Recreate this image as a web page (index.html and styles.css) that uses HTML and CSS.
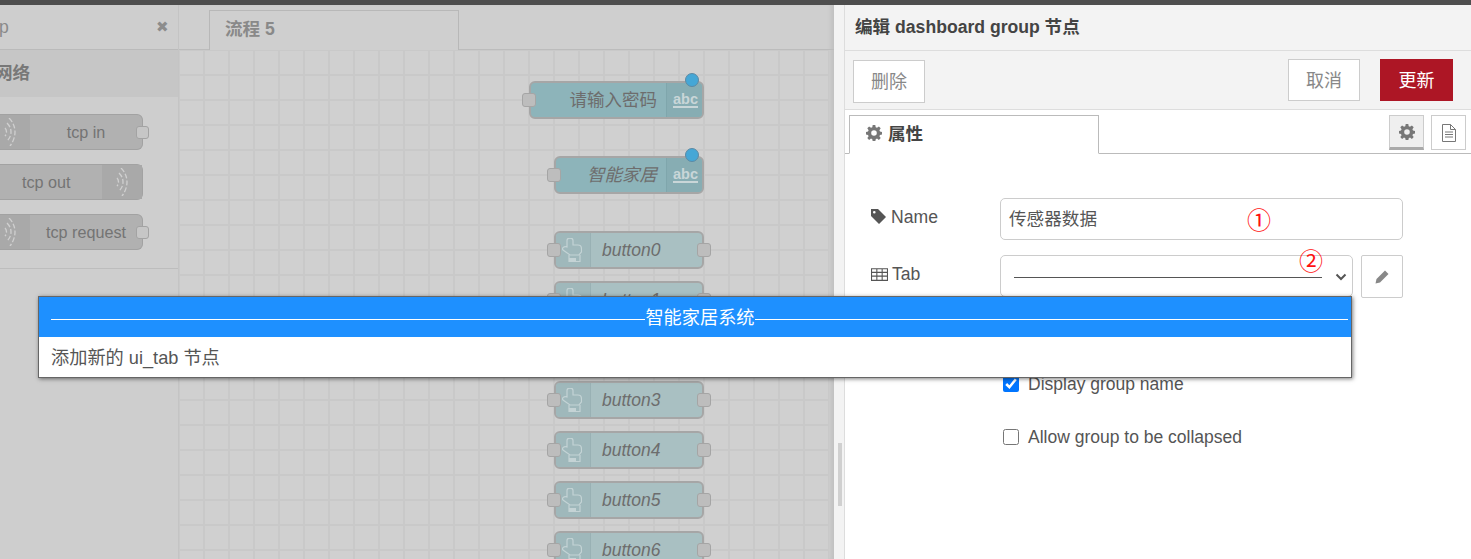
FILE: index.html
```html
<!DOCTYPE html>
<html lang="zh">
<head>
<meta charset="utf-8">
<title>Node-RED</title>
<link rel="stylesheet" href="styles.css">
</head>
<body>
<div class="topbar"></div>
<div class="main">
  <aside class="palette">
    <div class="palette-head"><span class="palette-title">p</span><span class="palette-close">✖</span></div>
    <div class="category-head">网络</div>
    <div class="category-body">
      <div class="pnode pnode-in"><span class="picon"><svg width="12" height="28" viewBox="0 0 12 28"><path class="wave" d="M5 0c4 4 6 9 6 14s-2 10-5 14M3 5c3 3 4 6 4 9s-1 6-4 9M1 10c1 1 1.500 3 1.500 4s-.5 3-1.500 4"/></svg></span><span class="plabel">tcp in</span><i class="pport"></i></div>
      <div class="pnode pnode-out"><span class="plabel">tcp out</span><span class="picon"><svg width="12" height="28" viewBox="0 0 12 28"><path class="wave" d="M5 0c4 4 6 9 6 14s-2 10-5 14M3 5c3 3 4 6 4 9s-1 6-4 9M1 10c1 1 1.500 3 1.500 4s-.5 3-1.500 4"/></svg></span></div>
      <div class="pnode pnode-in"><span class="picon"><svg width="12" height="28" viewBox="0 0 12 28"><path class="wave" d="M5 0c4 4 6 9 6 14s-2 10-5 14M3 5c3 3 4 6 4 9s-1 6-4 9M1 10c1 1 1.500 3 1.500 4s-.5 3-1.500 4"/></svg></span><span class="plabel plabel-req">tcp request</span><i class="pport"></i></div>
    </div>
  </aside>
  <section class="workspace">
    <div class="tabs"><div class="tab">流程 5</div></div>
    <div class="canvas">
      <div class="node node-text n-pass"><i class="port port-l"></i><span class="nlabel nlabel-r">请输入密码</span><span class="abc">abc</span><i class="dot"></i></div>
      <div class="node node-text n-home"><i class="port port-l"></i><span class="nlabel nlabel-r nlabel-i">智能家居</span><span class="abc">abc</span><i class="dot"></i></div>
      <div class="node node-btn n-b0"><i class="port port-l"></i><span class="hand"><svg width="20" height="24" viewBox="0 0 20 24"><path class="handp" d="M5 9V2.500c0-3.300 6-3.300 6 0V7h5c2.500 0 3.500 1.500 3.500 4v3L17 17H8L1 12c-1.500-2 1-4 4-3z"/><path class="handp" d="M7 17v6.500h11V17"/><path class="handf" d="M7 20h7v4H7z"/></svg></span><span class="nlabel nlabel-i">button0</span><i class="port port-r"></i></div>
      <div class="node node-btn n-b1"><i class="port port-l"></i><span class="hand"><svg width="20" height="24" viewBox="0 0 20 24"><path class="handp" d="M5 9V2.500c0-3.300 6-3.300 6 0V7h5c2.500 0 3.500 1.500 3.500 4v3L17 17H8L1 12c-1.500-2 1-4 4-3z"/><path class="handp" d="M7 17v6.500h11V17"/><path class="handf" d="M7 20h7v4H7z"/></svg></span><span class="nlabel nlabel-i">button1</span><i class="port port-r"></i></div>
      <div class="node node-btn n-b3"><i class="port port-l"></i><span class="hand"><svg width="20" height="24" viewBox="0 0 20 24"><path class="handp" d="M5 9V2.500c0-3.300 6-3.300 6 0V7h5c2.500 0 3.500 1.500 3.500 4v3L17 17H8L1 12c-1.500-2 1-4 4-3z"/><path class="handp" d="M7 17v6.500h11V17"/><path class="handf" d="M7 20h7v4H7z"/></svg></span><span class="nlabel nlabel-i">button3</span><i class="port port-r"></i></div>
      <div class="node node-btn n-b4"><i class="port port-l"></i><span class="hand"><svg width="20" height="24" viewBox="0 0 20 24"><path class="handp" d="M5 9V2.500c0-3.300 6-3.300 6 0V7h5c2.500 0 3.500 1.500 3.500 4v3L17 17H8L1 12c-1.500-2 1-4 4-3z"/><path class="handp" d="M7 17v6.500h11V17"/><path class="handf" d="M7 20h7v4H7z"/></svg></span><span class="nlabel nlabel-i">button4</span><i class="port port-r"></i></div>
      <div class="node node-btn n-b5"><i class="port port-l"></i><span class="hand"><svg width="20" height="24" viewBox="0 0 20 24"><path class="handp" d="M5 9V2.500c0-3.300 6-3.300 6 0V7h5c2.500 0 3.500 1.500 3.500 4v3L17 17H8L1 12c-1.500-2 1-4 4-3z"/><path class="handp" d="M7 17v6.500h11V17"/><path class="handf" d="M7 20h7v4H7z"/></svg></span><span class="nlabel nlabel-i">button5</span><i class="port port-r"></i></div>
      <div class="node node-btn n-b6"><i class="port port-l"></i><span class="hand"><svg width="20" height="24" viewBox="0 0 20 24"><path class="handp" d="M5 9V2.500c0-3.300 6-3.300 6 0V7h5c2.500 0 3.500 1.500 3.500 4v3L17 17H8L1 12c-1.500-2 1-4 4-3z"/><path class="handp" d="M7 17v6.500h11V17"/><path class="handf" d="M7 20h7v4H7z"/></svg></span><span class="nlabel nlabel-i">button6</span><i class="port port-r"></i></div>
    </div>
  </section>
  <div class="separator"><i class="grip"></i></div>
  <section class="tray">
    <header class="tray-title">编辑 dashboard group 节点</header>
    <div class="tray-actions">
      <button class="btn btn-delete">删除</button>
      <div class="spacer"></div>
      <button class="btn">取消</button>
      <button class="btn btn-primary">更新</button>
    </div>
    <div class="tray-tabs">
      <div class="ttab"><svg class="ic-gear" width="16" height="16" viewBox="0 0 16 16"><path fill-rule="evenodd" d="M6.700 0h2.600l.4 2.200 1.300.6L12.900 1.500l1.800 1.800-1.300 1.900.6 1.300 2 .4v2.600l-2 .4-.6 1.300 1.300 1.900-1.800 1.800-1.900-1.300-1.300.6-.4 2.200H6.700l-.4-2.200-1.300-.6-1.900 1.300-1.800-1.800 1.300-1.900-.6-1.300-2-.4V6.900l2-.4.6-1.300L1.300 3.300l1.800-1.800L5 2.800l1.300-.6zM8 5.200a2.800 2.800 0 1 0 0 5.600 2.800 2.800 0 0 0 0-5.600z"/></svg> 属性</div>
      <div class="spacer"></div>
      <button class="tbtn tbtn-on"><svg class="ic-gear" width="16" height="16" viewBox="0 0 16 16"><path fill-rule="evenodd" d="M6.700 0h2.600l.4 2.200 1.300.6L12.900 1.500l1.800 1.800-1.300 1.900.6 1.300 2 .4v2.600l-2 .4-.6 1.300 1.300 1.900-1.800 1.800-1.900-1.300-1.300.6-.4 2.200H6.700l-.4-2.200-1.300-.6-1.900 1.300-1.800-1.800 1.300-1.900-.6-1.300-2-.4V6.900l2-.4.6-1.300L1.300 3.300l1.800-1.800L5 2.800l1.300-.6zM8 5.200a2.800 2.800 0 1 0 0 5.600 2.800 2.800 0 0 0 0-5.600z"/></svg></button>
      <button class="tbtn"><svg width="14" height="18" viewBox="0 0 14 18"><path class="doc" d="M.5.500h8l5 5v12H.5zM8.500.500v5h5M3 8h8M3 10.500h8M3 13h8"/></svg></button>
    </div>
    <div class="form">
      <div class="row row-name">
        <label class="flabel"><svg width="16" height="16" viewBox="0 0 16 16"><path class="ic-fill" fill-rule="evenodd" d="M0 0h7l8 8-7 7-8-8zM3.300 2a1.300 1.300 0 1 0 0 2.600 1.300 1.300 0 0 0 0-2.600z"/></svg> Name</label>
        <div class="input">传感器数据</div>
      </div>
      <div class="row row-tab">
        <label class="flabel"><svg width="17" height="15" viewBox="0 0 16 14"><path class="ic-line" d="M.5 1.500h15v11H.5zM.5 5h15M.5 8.500h15M5.500 1.500v11M10.500 1.500v11"/></svg> Tab</label>
        <div class="select"><i class="select-line"></i><svg class="chev" width="12" height="8" viewBox="0 0 12 8"><path d="M1.500 1.500 6 6l4.500-4.500" /></svg></div>
        <button class="edit"><svg width="16" height="16" viewBox="0 0 16 16"><path class="ic-pencil" d="M11 1.500l3.500 3.500-8.500 8.500-4.500 1 1-4.500z"/></svg></button>
      </div>
      <label class="check check-1"><input type="checkbox" checked> Display group name</label>
      <label class="check check-2"><input type="checkbox"> Allow group to be collapsed</label>
    </div>
  </section>
</div>
<span class="mark mark-1">①</span>
<span class="mark mark-2">②</span>
<div class="menu">
  <div class="menu-item menu-sel"><i class="menu-rule"></i><span class="menu-text">智能家居系统</span></div>
  <div class="menu-item">添加新的 ui_tab 节点</div>
</div>
</body>
</html>
```
FILE: styles.css
```css
* { box-sizing: border-box; }
html, body { margin: 0; height: 100%; overflow: hidden; }
body { font-family: "Liberation Sans", "Noto Sans CJK SC", sans-serif; font-size: 17.6px; color: #555; background: #fff; position: relative; }
svg { display: block; }
.topbar { height: 5px; background: #4e4e4e; }
.main { display: flex; height: 554px; }
.spacer { flex: 1; }

/* palette */
.palette { width: 179px; flex: none; background: #cecece; border-right: 1px solid #c4c4c4; overflow: hidden; }
.palette-head { height: 45px; border-bottom: 1px solid #bababa; display: flex; justify-content: space-between; align-items: center; padding-right: 9px; font-size: 17.6px; color: #8a8a8a; }
.palette-title { margin-left: -1px; }
.palette-close { font-size: 15px; color: #8c8c8c; }
.category-head { height: 47px; background: #c6c6c6; font-weight: bold; color: #787878; font-size: 17.6px; line-height: 47px; text-indent: -5px; }
.category-body { height: 172px; border-bottom: 1px solid #bdbdbd; padding-top: 17px; display: flex; flex-direction: column; gap: 14px; }
.pnode { position: relative; width: 143px; height: 36px; flex: none; background: #b1b1b1; border: 1px solid #a2a2a2; border-left: 0; border-radius: 0 6px 6px 0; display: flex; font-size: 16.2px; line-height: 35px; color: #747474; }
.picon { width: 30px; flex: none; background: #a9a9a9; display: flex; align-items: center; justify-content: flex-end; padding-right: 14px; }
.pnode-in .plabel { flex: 1; text-align: center; }
.pnode-in .plabel-req { text-align: left; padding-left: 16px; }
.pnode-out .plabel { flex: 1; padding-left: 22px; }
.pnode-out .picon { width: 40px; justify-content: center; padding-right: 0; }
.wave { fill: none; stroke: #d0d0d0; stroke-width: 1.300; stroke-dasharray: 5 2; }
.pport { position: absolute; right: -7px; top: 11px; width: 13px; height: 13px; background: #c6c6c6; border: 1px solid #a3a3a3; border-radius: 3px; }

/* workspace */
.workspace { width: 655px; flex: none; display: flex; flex-direction: column; background: #cfcfcf; box-shadow: inset -5px 0 4px -2px #c0c0c0; }
.tabs { height: 45px; flex: none; padding: 5px 0 0 30px; border-bottom: 1px solid #bcbcbc; }
.tab { width: 250px; height: 40px; background: #cfcfcf; border: 1px solid #b8b8b8; border-bottom: 0; padding-left: 15px; line-height: 37px; font-weight: bold; font-size: 17.6px; color: #898989; }
.canvas { position: relative; flex: 1; margin-right: 5px;
  background-color: #d0d0d0;
  background-image: linear-gradient(to right, #c9c9c9 2px, transparent 2px), linear-gradient(to bottom, #c9c9c9 2px, transparent 2px);
  background-size: 25px 25px; background-position: 24px -1px; }

/* flow nodes: placed on a free canvas */
.node { position: absolute; height: 38px; border: 2px solid #a6a6a6; border-radius: 6px; display: flex; align-items: center; font-size: 17.5px; color: #6d6d6d; }
.node-text { background: #8db4ba; justify-content: flex-end; }
.node-btn { width: 150px; background: #a9c0c2; }
.n-pass { left: 350px; top: 31px; width: 175px; }
.n-home { left: 375px; top: 106px; width: 150px; }
.n-b0 { left: 375px; top: 181px; }
.n-b1 { left: 375px; top: 231px; }
.n-b3 { left: 375px; top: 331px; }
.n-b4 { left: 375px; top: 381px; }
.n-b5 { left: 375px; top: 431px; }
.n-b6 { left: 375px; top: 481px; }
.nlabel-r { margin-right: 9px; padding-bottom: 3px; }
.nlabel-i { font-style: italic; }
.abc { width: 36px; height: 100%; flex: none; background: #87adb3; border-left: 1px solid #7fa6ac; border-radius: 0 4px 4px 0; color: #c9d6d8; font-weight: bold; font-size: 14.5px; line-height: 33px; text-align: center; padding-left: 2px; text-decoration: underline; text-underline-offset: 2px; text-decoration-thickness: 2px; }
.hand { width: 35px; height: 100%; background: #9fb8bb; border-right: 1px solid #99b1b4; border-radius: 4px 0 0 4px; display: flex; align-items: center; justify-content: center; flex: none; padding-right: 3px; }
.handp { fill: none; stroke: #c4d3d5; stroke-width: 1.200; }
.handf { fill: #c4d3d5; }
.node-btn .nlabel { margin-left: 11px; padding-bottom: 0; }
.port { position: absolute; top: 10px; width: 14px; height: 14px; background: #bdbdbd; border: 1px solid #a5a5a5; border-radius: 3px; }
.port-l { left: -9px; }
.port-r { right: -9px; }
.dot { position: absolute; right: 3px; top: -10px; width: 14px; height: 14px; border-radius: 50%; background: #45a7d6; border: 1px solid #5c8aa4; }

/* separator */
.separator { width: 11px; flex: none; background: #f3f3f3; position: relative; border-right: 1px solid #ddd; }
.grip { position: absolute; left: 4px; top: 438px; width: 4px; height: 63px; background: #d0d0d0; }

/* tray */
.tray { width: 626px; flex: none; position: relative; background: #fff; }
.tray-title { height: 46px; background: #f3f3f3; border-bottom: 1px solid #ddd; padding-left: 10px; line-height: 44px; font-weight: bold; font-size: 17.6px; color: #444; }
.tray-actions { height: 59px; background: #f3f3f3; border-bottom: 1px solid #ddd; display: flex; align-items: flex-start; padding: 8px 18px 0 8px; gap: 20px; }
.btn { width: 72px; height: 42px; background: #fff; border: 1px solid #ccc; font: inherit; font-size: 18px; color: #888; padding: 0 0 2px; }
.btn-delete { margin-top: 1px; height: 43px; padding-bottom: 3px; }
.btn-primary { width: 73px; background: #ad1625; border-color: #ad1625; color: #fff; }
.tray-tabs { height: 44px; display: flex; align-items: flex-start; padding: 5px 5px 0 4px; gap: 7px; border-bottom: 1px solid #bbb; }
.ttab { width: 250px; height: 39px; background: #fff; border: 1px solid #bbb; border-bottom: 1px solid #fff; padding: 0 0 4px 16px; font-weight: bold; font-size: 17.6px; color: #444; display: flex; align-items: center; gap: 6px; }
.ic-gear { fill: #777; }
.tbtn { width: 35px; height: 35px; background: #fff; border: 1px solid #ccc; padding: 0; display: flex; align-items: center; justify-content: center; }
.tbtn-on { background: #efefef; border-bottom: 3px solid #aaa; }
.doc { fill: none; stroke: #777; stroke-width: 1; }
.form { position: relative; padding: 44px 0 0 26px; }
.row { display: flex; align-items: flex-start; }
.row-tab { margin-top: 15px; }
.flabel { width: 129px; flex: none; display: flex; align-items: center; gap: 4px; color: #555; height: 38px; }
.ic-fill { fill: #555; }
.ic-line { fill: none; stroke: #555; }
.ic-pencil { fill: #888; }
.input { width: 403px; height: 42px; border: 1px solid #ccc; border-radius: 5px; padding-left: 8px; line-height: 41px; color: #555; }
.select { width: 353px; height: 42px; border: 1px solid #ccc; border-radius: 5px; position: relative; display: flex; align-items: center; padding: 2px 0 0 13px; }
.select-line { width: 308px; height: 1px; background: #555; }
.chev { margin-left: 13px; fill: none; stroke: #555; stroke-width: 2; }
.edit { width: 42px; height: 43px; margin-left: 8px; background: #fff; border: 1px solid #ccc; border-radius: 2px; padding: 0; display: flex; align-items: center; justify-content: center; }
.check { display: flex; align-items: center; gap: 9px; margin-left: 132px; color: #555; height: 20px; font-size: 17.5px; }
.check input { margin: 0; width: 16px; height: 16px; flex: none; }
.check-1 { margin-top: 76px; }
.check-2 { margin-top: 33px; }

/* annotations and menu overlay */
.mark { position: absolute; color: #f11; font-size: 24px; line-height: 1; font-family: "Noto Sans CJK SC", sans-serif; }
.mark-1 { left: 1247px; top: 207px; }
.mark-2 { left: 1299px; top: 248px; }
.menu { position: absolute; left: 38px; top: 296px; width: 1314px; height: 82px; background: #fff; border: 1px solid #666; box-shadow: 1px 1px 4px rgba(0,0,0,.5); }
.menu-item { height: 41px; padding-left: 12px; line-height: 43px; font-size: 18.2px; color: #555; position: relative; }
.menu-sel { height: 40px; background: #1e90ff; color: #fff; text-align: center; line-height: 43px; padding: 0 0 0 10px; }
.menu-rule { position: absolute; left: 12px; right: 3px; top: 22px; height: 1px; background: #fff; }
.menu-text { position: relative; background: #1e90ff; }
```
